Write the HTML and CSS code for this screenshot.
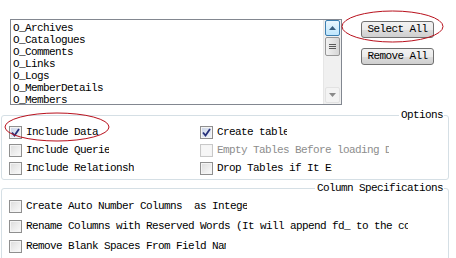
FILE: index.html
```html
<!DOCTYPE html>
<html lang="en">
<head>
    <meta charset="UTF-8">
    <title>Export Tables</title>
    <link rel="stylesheet" href="styles.css">
</head>
<body>

    <div class="top">
        <div class="listbox">
            <div class="items">
                <div>O_Archives</div>
                <div>O_Catalogues</div>
                <div>O_Comments</div>
                <div>O_Links</div>
                <div>O_Logs</div>
                <div>O_MemberDetails</div>
                <div>O_Members</div>
            </div>
            <div class="scrollbar">
                <div class="sb-btn sb-up"><svg width="7" height="4" viewBox="0 0 7 4"><path d="M0 4 L3.5 0 L7 4 Z" fill="#3a5f80"/></svg></div>
                <div class="sb-thumb"><span></span><span></span><span></span></div>
                <div class="sb-track"></div>
                <div class="sb-btn sb-down"><svg width="7" height="4" viewBox="0 0 7 4"><path d="M0 0 L3.5 4 L7 0 Z" fill="#8a8a8a"/></svg></div>
            </div>
        </div>
        <div class="actions">
            <button class="btn">Select All</button>
            <button class="btn">Remove All</button>
        </div>
    </div>

    <fieldset class="group options">
        <legend>Options</legend>
        <div class="opt-grid">
            <label class="check"><span class="box checked"><svg width="11" height="11" viewBox="0 0 11 11"><path d="M2 5.5 L4.5 8.5 L9 2" fill="none" stroke="#26307a" stroke-width="1.8"/></svg></span><span class="txt w-data">Include Data</span></label>
            <label class="check"><span class="box checked"><svg width="11" height="11" viewBox="0 0 11 11"><path d="M2 5.5 L4.5 8.5 L9 2" fill="none" stroke="#26307a" stroke-width="1.8"/></svg></span><span class="txt w-create">Create table</span></label>
            <label class="check"><span class="box"></span><span class="txt w-query">Include Queries</span></label>
            <label class="check disabled"><span class="box"></span><span class="txt w-empty">Empty Tables Before loading Data</span></label>
            <label class="check"><span class="box"></span><span class="txt w-rel">Include Relationships</span></label>
            <label class="check"><span class="box"></span><span class="txt w-drop">Drop Tables if It Exists</span></label>
        </div>
    </fieldset>

    <fieldset class="group colspec">
        <legend>Column Specifications</legend>
        <label class="check"><span class="box"></span><span class="txt w-auto">Create Auto Number Columns  as Integer</span></label>
        <label class="check"><span class="box"></span><span class="txt w-rename">Rename Columns with Reserved Words (It will append fd_ to the column name)</span></label>
        <label class="check"><span class="box"></span><span class="txt w-blank">Remove Blank Spaces From Field Names</span></label>
    </fieldset>

    <svg class="mark mark-select" width="103" height="33" viewBox="0 0 103 33"><ellipse cx="51.5" cy="16.5" rx="50.5" ry="15.5" fill="none" stroke="#b8101c" stroke-width="1"/></svg>
    <svg class="mark mark-data" width="106" height="30" viewBox="0 0 106 30"><ellipse cx="53" cy="15" rx="52" ry="14" fill="none" stroke="#b8101c" stroke-width="1"/></svg>

</body>
</html>
```

FILE: styles.css
```css
body {
    margin: 0;
    background-color: #fff;
    color: #000;
    font-family: "Liberation Mono", "DejaVu Sans Mono", monospace;
    font-size: 11px;
    letter-spacing: -0.6px;
    position: relative;
    width: 456px;
    height: 258px;
    overflow: hidden;
}

.top {
    display: flex;
    align-items: flex-start;
    padding: 19px 0 0 10px;
}

.listbox {
    display: flex;
    width: 330px;
    height: 84px;
    border: 1px solid #828790;
    overflow: hidden;
}

.items {
    flex: 1;
    padding: 2px 0 0 2px;
    line-height: 12px;
}

.items div {
    white-space: nowrap;
}

.scrollbar {
    width: 17px;
    display: flex;
    flex-direction: column;
    background-color: #f0f0f0;
    border-left: 1px solid #e6e6e6;
}

.sb-btn {
    height: 16px;
    display: flex;
    align-items: center;
    justify-content: center;
    box-sizing: border-box;
    margin: 0 1px;
}

.sb-up {
    border: 1px solid #3c7fb1;
    border-radius: 2px;
    background: linear-gradient(#eaf6fd, #bee6fd);
}

.sb-down {
    border: 1px solid #e2e2e2;
    border-radius: 2px;
    background: #f3f3f3;
    margin-bottom: 1px;
}

.sb-thumb {
    height: 19px;
    margin: 1px 1px 0;
    border: 1px solid #979797;
    border-radius: 2px;
    background: linear-gradient(to right, #f2f2f2, #d6d6d6);
    box-sizing: border-box;
    display: flex;
    flex-direction: column;
    justify-content: center;
    align-items: center;
    gap: 1px;
}

.sb-thumb span {
    display: block;
    width: 7px;
    height: 1px;
    background-color: #5a5a5a;
}

.sb-track {
    flex: 1;
}

.actions {
    display: flex;
    flex-direction: column;
    gap: 10px;
    margin: 2px 0 0 19px;
}

.btn {
    width: 73px;
    height: 17px;
    padding: 0;
    border: 1px solid #707070;
    border-radius: 3px;
    background: linear-gradient(#f2f2f2 0%, #ebebeb 50%, #dddddd 51%, #cfcfcf 100%);
    font-family: inherit;
    font-size: 11px;
    letter-spacing: -0.6px;
    color: #000;
    line-height: 15px;
}

.group {
    margin: 4px 7px 0 1px;
    padding: 0 0 0 7px;
    border: 1px solid #d5dfe5;
    border-radius: 3px;
}

.group legend {
    margin-left: auto;
    margin-right: 4px;
    padding: 0 1px 0 2px;
    line-height: 12px;
}

.options {
    padding-top: 2px;
    padding-bottom: 2px;
}

.opt-grid {
    display: grid;
    grid-template-columns: 191px 1fr;
}

.colspec {
    margin-top: 2px;
    padding-top: 2px;
    height: 80px;
}

.check {
    display: flex;
    align-items: center;
    height: 18px;
}

.colspec .check {
    height: 20px;
}

.box {
    width: 11px;
    height: 11px;
    border: 1px solid #8f8f8f;
    background: linear-gradient(135deg, #dcdcdc, #fbfbfb);
    box-shadow: inset 0 0 0 1px #f4f4f4;
    display: flex;
    flex-shrink: 0;
    margin-right: 4px;
}

.box.checked {
    background: linear-gradient(135deg, #c9d3e6, #f2f5fb);
}

.disabled .box {
    border-color: #c8c8c8;
    background: #f6f6f6;
}

.disabled .txt {
    color: #8d8d8d;
}

.txt {
    display: block;
    white-space: pre;
    overflow: hidden;
    line-height: 14px;
}

.w-data { width: 74px; }
.w-query { width: 83px; }
.w-rel { width: 108px; }
.w-create { width: 70px; }
.w-empty { width: 172px; }
.w-drop { width: 115px; }
.w-auto { width: 221px; }
.w-rename { width: 382px; }
.w-blank { width: 200px; }

.mark {
    position: absolute;
}

.mark-select {
    left: 341px;
    top: 10px;
}

.mark-data {
    left: 4px;
    top: 112px;
}
```
